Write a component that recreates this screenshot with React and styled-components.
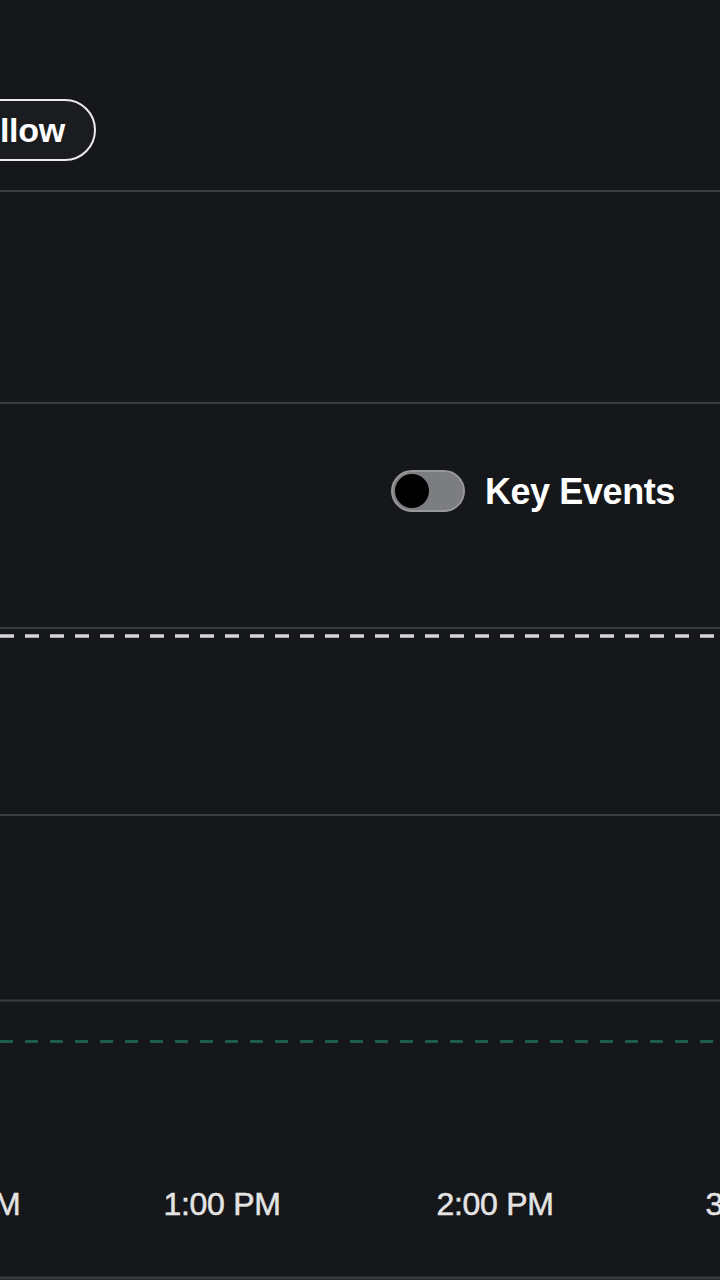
import React from "react";
import styled, { createGlobalStyle } from "styled-components";

const GlobalStyle = createGlobalStyle`
  html, body {
    margin: 0;
    padding: 0;
    background: #16171a;
    overflow: hidden;
  }
  * {
    box-sizing: border-box;
  }
`;

const Page = styled.div`
  width: 720px;
  height: 1280px;
  display: flex;
  flex-direction: column;
  background: #16171a;
  color: #fff;
  font-family: "Liberation Sans", Arial, sans-serif;
  overflow: hidden;
`;

// 상단 프로필 영역
const Header = styled.div`
  height: 192px;
  padding-top: 99px;
  border-bottom: 2px solid #3b3c3f;
  display: flex;
  align-items: flex-start;
  flex-shrink: 0;
`;

const FollowButton = styled.button`
  height: 62px;
  margin-left: -73px;
  padding: 0 29px 0 30px;
  border: 2px solid #ececec;
  border-radius: 31px;
  background: #1b1c20;
  color: #fff;
  font-family: inherit;
  font-size: 34px;
  font-weight: 700;
  letter-spacing: -0.3px;
  line-height: 1;
`;

// 빈 섹션
const Section = styled.div`
  height: ${(p) => p.$h}px;
  border-bottom: 2px solid #3b3c3f;
  flex-shrink: 0;
`;

// 토글 영역
const Controls = styled.div`
  height: 223px;
  display: flex;
  justify-content: flex-end;
  align-items: flex-start;
  padding: 65px 45px 0 0;
  flex-shrink: 0;
`;

const ToggleRow = styled.label`
  display: flex;
  align-items: center;
  gap: 20px;
`;

const Track = styled.span`
  width: 74px;
  height: 42px;
  border-radius: 21px;
  background: #7c7d80;
  border: 2px solid #97989a;
  display: flex;
  align-items: center;
  padding-left: 2px;
`;

const Knob = styled.span`
  width: 34px;
  height: 34px;
  border-radius: 50%;
  background: #000;
`;

const ToggleLabel = styled.span`
  font-size: 36px;
  font-weight: 700;
  color: #fff;
  letter-spacing: -0.4px;
  padding-top: 2px;
`;

// 차트
const Chart = styled.svg`
  display: block;
  width: 720px;
  height: 653px;
  flex-shrink: 0;
`;

const AxisText = styled.text`
  font-family: "Liberation Sans", Arial, sans-serif;
  font-size: 32px;
  fill: #e4e4e4;
  letter-spacing: -0.3px;
  stroke: #e4e4e4;
  stroke-width: 0.5px;
`;

const ticks = [
  { label: "12:00 PM", x: -47 },
  { label: "1:00 PM", x: 222 },
  { label: "2:00 PM", x: 495 },
  { label: "3:00 PM", x: 764 },
];

export default function App() {
  return (
    <>
      <GlobalStyle />
      <Page>
        <Header>
          <FollowButton type="button">Follow</FollowButton>
        </Header>
        <Section $h={212} />
        <Controls>
          <ToggleRow>
            <Track>
              <Knob />
            </Track>
            <ToggleLabel>Key Events</ToggleLabel>
          </ToggleRow>
        </Controls>
        <Chart viewBox="0 0 720 653">
          <line x1="0" x2="720" y1="1" y2="1" stroke="#3b3c3f" strokeWidth="2" />
          <line
            x1="0"
            x2="720"
            y1="9"
            y2="9"
            stroke="#d6d6d6"
            strokeWidth="3.5"
            strokeDasharray="14 11"
          />
          <line x1="0" x2="720" y1="188" y2="188" stroke="#3b3c3f" strokeWidth="2" />
          <line x1="0" x2="720" y1="373.5" y2="373.5" stroke="#3b3c3f" strokeWidth="2" />
          <line
            x1="0"
            x2="720"
            y1="414.5"
            y2="414.5"
            stroke="#1e5c4a"
            strokeWidth="3"
            strokeDasharray="13 12"
          />
          {ticks.map((t) => (
            <AxisText key={t.label} x={t.x} y="588" textAnchor="middle">
              {t.label}
            </AxisText>
          ))}
          <line x1="0" x2="720" y1="651" y2="651" stroke="#3b3c3f" strokeWidth="3" />
        </Chart>
      </Page>
    </>
  );
}
